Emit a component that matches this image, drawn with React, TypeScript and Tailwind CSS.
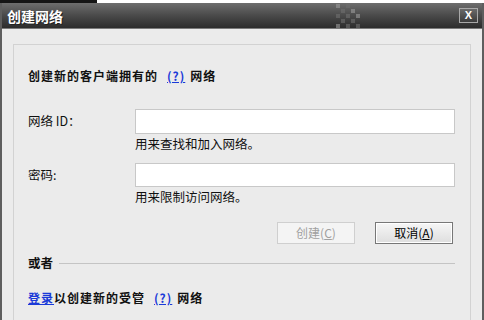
import React from "react";

const cjk = { fontFamily: '"Noto Sans CJK SC", "Liberation Sans", sans-serif' };

function Checker() {
  const cells = [
    [0, 0], [2, 0], [1, 1], [3, 1], [0, 2], [2, 2], [4, 2], [1, 3], [3, 3], [0, 4], [2, 4], [4, 4],
  ];
  return (
    <svg width="26" height="24" viewBox="0 0 26 24" className="opacity-60">
      {cells.map(([x, y], i) => (
        <rect key={i} x={x * 5} y={y * 5} width="4" height="4" fill={i % 3 === 0 ? "#9a9a9a" : "#6f6f6f"} />
      ))}
    </svg>
  );
}

export default function App() {
  return (
    <div className="w-[484px] h-[320px] overflow-hidden bg-[#ebebeb] flex flex-col" style={cjk}>
      <div className="h-[3px] flex shrink-0">
        <div className="w-[97px] bg-[#151515]" />
        <div className="flex-1 bg-white" />
      </div>
      <div className="flex-1 flex flex-col border-x-2 border-[#5e5e5e]">
        {/* title bar */}
        <div className="h-[26px] shrink-0 flex items-center justify-between pl-[5px] pr-[4px] bg-gradient-to-b from-[#6e6e6e] via-[#4a4a4a] to-[#2c2c2c] border-b border-[#7a7a7a]">
          <span className="text-white text-[14px] font-bold leading-none [text-shadow:1px_1px_0_#222]">创建网络</span>
          <div className="flex items-center gap-[97px]">
            <Checker />
            <div className="w-[19px] h-[15px] border border-[#a8a8a8] bg-gradient-to-b from-[#6a6a6a] to-[#3c3c3c] flex items-center justify-center text-white text-[11px] font-bold leading-none" style={{ fontFamily: '"Liberation Sans", sans-serif' }}>
              X
            </div>
          </div>
        </div>
        {/* body */}
        <div className="flex-1 pt-[15px] pl-[11px] pr-[11px]">
          <div className="h-full border border-b-0 border-[#d2d2d2] pl-[14px] pr-[15px] flex flex-col text-[#111]">
            <div className="mt-[24px] h-[14px] flex items-center text-[12px] font-semibold tracking-[1px] leading-none">
              创建新的客户端拥有的
              <span className="ml-[9px] text-[#1a3ad8] underline">(?)</span>
              <span className="ml-[5px]">网络</span>
            </div>

            <div className="mt-[26px] flex items-center">
              <span className="w-[107px] text-[12.5px] leading-none">网络 ID：</span>
              <div className="flex-1 h-[25px] bg-white border border-[#c8c8c8]" />
            </div>
            <div className="mt-[3px] ml-[107px] h-[14px] flex items-center text-[12.5px] leading-none">用来查找和加入网络。</div>

            <div className="mt-[12px] flex items-center">
              <span className="w-[107px] text-[12.5px] leading-none">密码:</span>
              <div className="flex-1 h-[24px] bg-white border border-[#c8c8c8]" />
            </div>
            <div className="mt-[3px] ml-[107px] h-[14px] flex items-center text-[12.5px] leading-none">用来限制访问网络。</div>

            <div className="mt-[18px] flex justify-end gap-[20px] mr-[2px]">
              <div className="w-[78px] h-[22px] bg-[#f4f4f4] border border-[#cfcfcf] flex items-center justify-center text-[12px] text-[#a0a0a0] leading-none">
                创建(<span className="underline">C</span>)
              </div>
              <div className="w-[78px] h-[22px] bg-gradient-to-b from-[#f6f6f6] to-[#dedede] border border-[#777] shadow-[inset_0_0_0_1px_#fff] flex items-center justify-center text-[12px] text-black leading-none">
                取消(<span className="underline">A</span>)
              </div>
            </div>

            <div className="mt-[12px] h-[14px] flex items-center gap-[6px]">
              <span className="text-[12.5px] font-bold leading-none">或者</span>
              <div className="flex-1 h-px bg-[#c4c4c4]" />
            </div>

            <div className="mt-[21px] h-[14px] flex items-center text-[12px] font-semibold tracking-[1px] leading-none">
              <span className="text-[#1a3ad8] underline">登录</span>
              以创建新的受管
              <span className="ml-[9px] text-[#1a3ad8] underline">(?)</span>
              <span className="ml-[5px]">网络</span>
            </div>
          </div>
        </div>
      </div>
    </div>
  );
}
